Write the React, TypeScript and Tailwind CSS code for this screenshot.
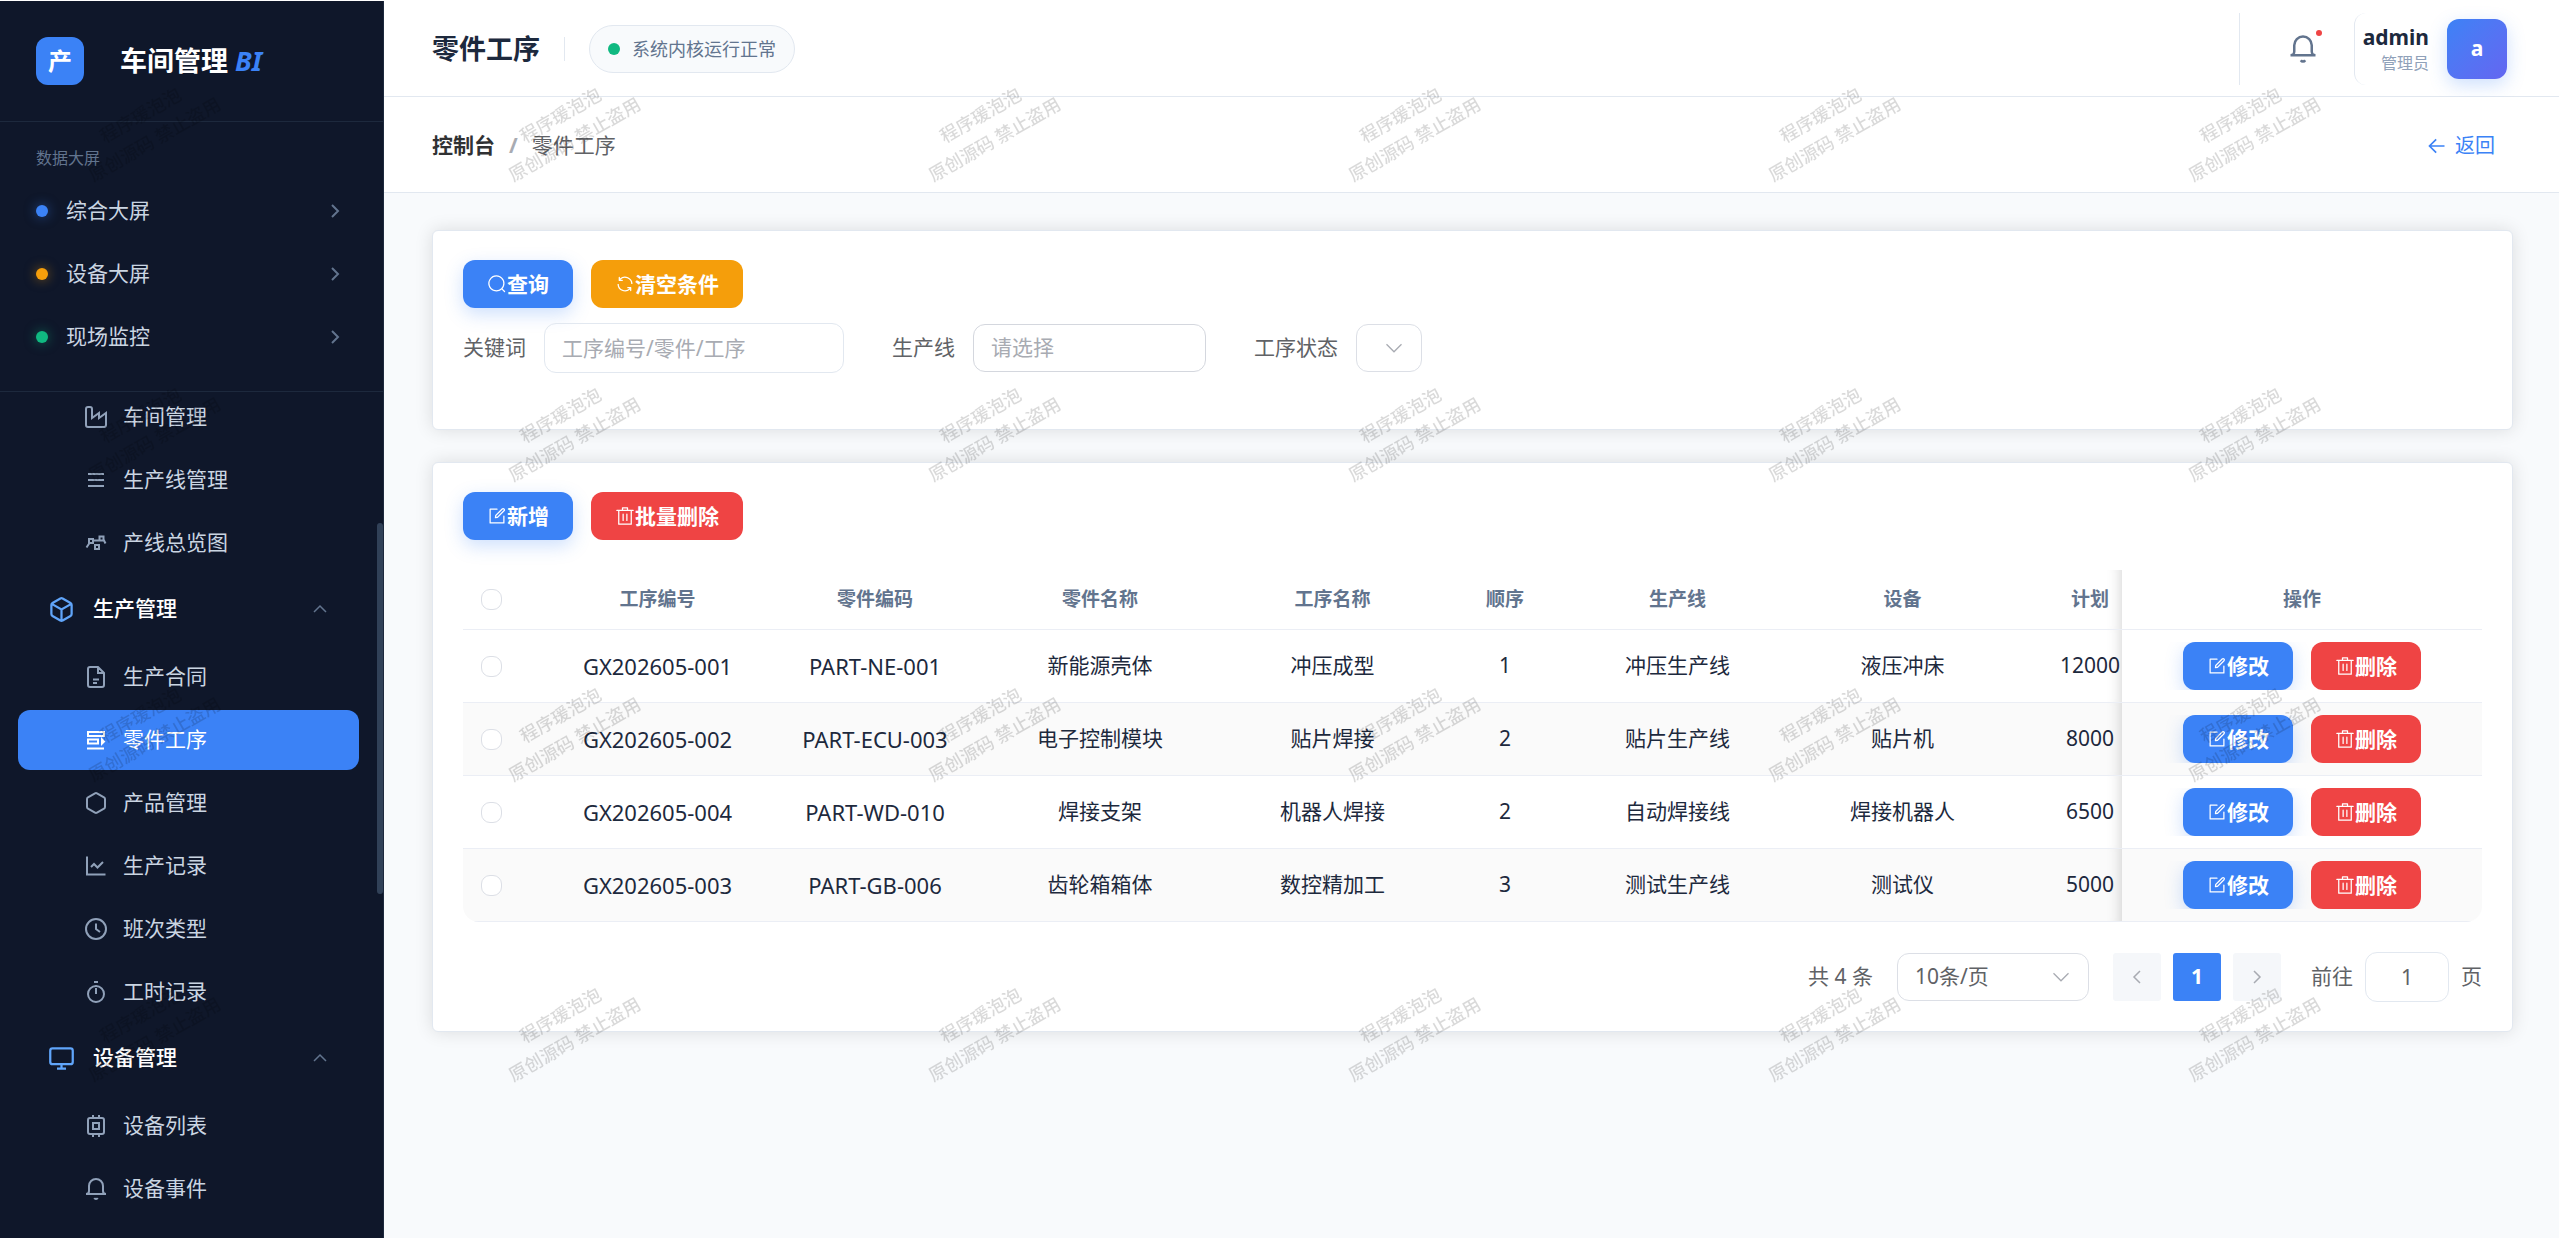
import React from 'react';
import clsx from 'clsx';

const screens = [
    { name: '综合大屏', dot: 'bg-[#3b82f6] shadow-[0_0_12px_#3b82f680]' },
    { name: '设备大屏', dot: 'bg-[#f59e0b] shadow-[0_0_12px_#f59e0b80]' },
    { name: '现场监控', dot: 'bg-[#10b981] shadow-[0_0_12px_#10b98180]' },
];

const HEXAGON = 'M21 16V8a2 2 0 0 0-1-1.73l-7-4a2 2 0 0 0-2 0l-7 4A2 2 0 0 0 3 8v8a2 2 0 0 0 1 1.73l7 4a2 2 0 0 0 2 0l7-4A2 2 0 0 0 21 16z';
const BELL = 'M22 17H2a3 3 0 0 0 3-3V9a7 7 0 0 1 14 0v5a3 3 0 0 0 3 3zm-8.27 4a2 2 0 0 1-3.46 0';

// 24x24 stroke icons
const icons: Record<string, string> = {
    factory: 'M2 20a2 2 0 0 0 2 2h16a2 2 0 0 0 2-2V8l-7 5V8l-7 5V4a2 2 0 0 0-2-2H4a2 2 0 0 0-2 2Z',
    list: 'M4 6h16M4 12h16M4 18h16',
    graph: 'M5 8h4v4H5zM15.5 5.500h4v4h-4zM11 14h4v4h-4zM2.500 16.500l3-4.500M9 9.500h6.500M19.500 8.500l2 4',
    box: HEXAGON + 'M3.300 7l8.700 5 8.700-5M12 22V12',
    file: 'M14 2H6a2 2 0 0 0-2 2v16a2 2 0 0 0 2 2h12a2 2 0 0 0 2-2V8zM14 2v6h6M9 14.500h6M9 18h4',
    process: 'M4 4h16v4H4zM4 11.500h10v4H4zM3 20.500h17M18 11.500l2 2-2 2z',
    hexagon: HEXAGON,
    chart: 'M3 2.500v18h18.500M7 13l3-3 3.500 3.500L19 8',
    clock: 'M12 2a10 10 0 1 0 0 20 10 10 0 0 0 0-20zM12 6.500v5.500l4 3',
    timer: 'M10 2h4M12 8v6M12 6a8 8 0 1 0 0 16 8 8 0 0 0 0-16z',
    monitor: 'M4 3h16a2 2 0 0 1 2 2v10a2 2 0 0 1-2 2H4a2 2 0 0 1-2-2V5a2 2 0 0 1 2-2zM8 21h8M12 17v4',
    cpu: 'M6 4h12a2 2 0 0 1 2 2v12a2 2 0 0 1-2 2H6a2 2 0 0 1-2-2V6a2 2 0 0 1 2-2zM9 9h6v6H9zM9 1v3M15 1v3M9 20v3M15 20v3',
    bell: BELL,
    arrowLeft: 'M21 12H3M11 4l-8 8 8 8',
};

// 1024x1024 filled icons used inside buttons
const glyphs: Record<string, string> = {
    search: 'm795.904 750.72 124.992 124.928a32 32 0 0 1-45.248 45.248L750.656 795.904a416 416 0 1 1 45.248-45.248zM480 832a352 352 0 1 0 0-704 352 352 0 0 0 0 704z',
    refresh: 'M771.776 794.88A384 384 0 0 1 128 512h64a320 320 0 0 0 555.712 216.448H654.72a32 32 0 1 1 0-64h149.056a32 32 0 0 1 32 32v148.928a32 32 0 1 1-64 0v-50.56zM276.288 295.616h92.992a32 32 0 0 1 0 64H220.16a32 32 0 0 1-32-32V178.56a32 32 0 0 1 64 0v50.56A384 384 0 0 1 896.128 512h-64a320 320 0 0 0-555.776-216.384z',
    edit: 'M832 512a32 32 0 1 1 64 0v352a32 32 0 0 1-32 32H160a32 32 0 0 1-32-32V160a32 32 0 0 1 32-32h352a32 32 0 0 1 0 64H192v640h640V512zm-362.048 42.24 52.8-7.552L847.104 222.4a32 32 0 1 0-45.248-45.248L477.44 501.44l-7.552 52.8zm422.4-422.4a96 96 0 0 1 0 135.808l-331.84 331.84a32 32 0 0 1-18.112 9.088L436.8 623.68a32 32 0 0 1-36.224-36.224l15.104-105.6a32 32 0 0 1 9.024-18.112l331.904-331.84a96 96 0 0 1 135.744 0z',
    delete: 'M160 256H96a32 32 0 0 1 0-64h256V95.936a32 32 0 0 1 32-32h256a32 32 0 0 1 32 32V192h256a32 32 0 1 1 0 64h-64v672a32 32 0 0 1-32 32H192a32 32 0 0 1-32-32V256zm448-64v-64H416v64h192zM224 896h576V256H224v640zm192-128a32 32 0 0 1-32-32V416a32 32 0 0 1 64 0v320a32 32 0 0 1-32 32zm192 0a32 32 0 0 1-32-32V416a32 32 0 0 1 64 0v320a32 32 0 0 1-32 32z',
};

type MenuEntry = { name: string; icon: string; group?: boolean; active?: boolean };

const menu: MenuEntry[] = [
    { name: '车间管理', icon: 'factory' },
    { name: '生产线管理', icon: 'list' },
    { name: '产线总览图', icon: 'graph' },
    { name: '生产管理', icon: 'box', group: true },
    { name: '生产合同', icon: 'file' },
    { name: '零件工序', icon: 'process', active: true },
    { name: '产品管理', icon: 'hexagon' },
    { name: '生产记录', icon: 'chart' },
    { name: '班次类型', icon: 'clock' },
    { name: '工时记录', icon: 'timer' },
    { name: '设备管理', icon: 'monitor', group: true },
    { name: '设备列表', icon: 'cpu' },
    { name: '设备事件', icon: 'bell' },
];

const columns = [
    { title: '工序编号', width: 'w-[225px]' },
    { title: '零件编码', width: 'w-[210px]' },
    { title: '零件名称', width: 'w-[240px]' },
    { title: '工序名称', width: 'w-[225px]' },
    { title: '顺序', width: 'w-[120px]' },
    { title: '生产线', width: 'w-[225px]' },
    { title: '设备', width: 'w-[225px]' },
    { title: '计划', width: 'w-[150px]' },
];

const rows = [
    ['GX202605-001', 'PART-NE-001', '新能源壳体', '冲压成型', '1', '冲压生产线', '液压冲床', '12000'],
    ['GX202605-002', 'PART-ECU-003', '电子控制模块', '贴片焊接', '2', '贴片生产线', '贴片机', '8000'],
    ['GX202605-004', 'PART-WD-010', '焊接支架', '机器人焊接', '2', '自动焊接线', '焊接机器人', '6500'],
    ['GX202605-003', 'PART-GB-006', '齿轮箱箱体', '数控精加工', '3', '测试生产线', '测试仪', '5000'],
];

function Icon({ name, className }: { name: string; className?: string }) {
    return (
        <svg viewBox="0 0 24 24" fill="none" stroke="currentColor" strokeWidth="2" className={clsx('shrink-0', className)}>
            <path d={icons[name]} />
        </svg>
    );
}

function Chevron({ dir, className }: { dir: 'up' | 'down' | 'left' | 'right'; className?: string }) {
    const d = {
        up: 'M2 11l6-6 6 6',
        down: 'M2 5l6 6 6-6',
        left: 'M11 2L5 8l6 6',
        right: 'M5 2l6 6-6 6',
    }[dir];
    return (
        <svg viewBox="0 0 16 16" fill="none" stroke="currentColor" className={clsx('shrink-0', className)}>
            <path d={d} />
        </svg>
    );
}

function Button({ icon, color, children }: { icon: string; color: 'blue' | 'amber' | 'red'; children: React.ReactNode }) {
    return (
        <button
            type="button"
            className={clsx(
                'flex h-12 items-center rounded-xl px-6 text-[21px] leading-none font-semibold whitespace-nowrap text-white',
                color === 'blue' && 'bg-[#3b82f6] shadow-[0_6px_18px_rgba(59,130,246,0.25)]',
                color === 'amber' && 'bg-[#f59e0b]',
                color === 'red' && 'bg-[#ef4444]'
            )}
        >
            <svg viewBox="0 0 1024 1024" fill="currentColor" className="size-5 shrink-0">
                <path d={glyphs[icon]} />
            </svg>
            {children}
        </button>
    );
}

function Sidebar() {
    return (
        <aside className="relative flex w-[384px] shrink-0 flex-col border-r border-slate-800 bg-[#0f172a]">
            <div className="flex h-[121px] shrink-0 items-center border-b border-slate-800 pl-9">
                <div className="flex size-12 items-center justify-center rounded-xl bg-[#3b82f6] text-2xl leading-none font-bold text-white">产</div>
                <div className="ml-9 text-[27px] leading-9 font-bold text-white">
                    车间管理 <span className="text-[#3b82f6] italic">BI</span>
                </div>
            </div>

            <div className="shrink-0 border-b border-slate-800 px-9 pt-6 pb-[21px]">
                <div className="mb-[11px] text-base leading-6 text-slate-500">数据大屏</div>
                {screens.map((s) => (
                    <a key={s.name} href="#" className="mb-[3px] flex h-[60px] items-center text-[21px] text-slate-300">
                        <span className={clsx('mr-[18px] size-3 rounded-full', s.dot)} />
                        {s.name}
                        <Chevron dir="right" className="mr-1 ml-auto size-4 text-slate-500 stroke-2" />
                    </a>
                ))}
            </div>

            <nav className="min-h-0 flex-1 overflow-hidden">
                <div className="-mt-[5px] flex flex-col pr-6 pl-[18px]">
                    {menu.map((m) =>
                        m.group ? (
                            <button key={m.name} type="button" className="mb-[5px] flex h-[66px] shrink-0 items-center pr-[31px] pl-[30px] text-[21px] font-medium text-white">
                                <Icon name={m.icon} className="mr-[18px] size-[27px] text-[#60a5fa]" />
                                {m.name}
                                <Chevron dir="up" className="ml-auto size-4 text-slate-500 stroke-[1.5]" />
                            </button>
                        ) : (
                            <a
                                key={m.name}
                                href="#"
                                className={clsx(
                                    'mb-[3px] flex h-[60px] shrink-0 items-center rounded-xl pl-[66px] text-[21px]',
                                    m.active ? 'bg-[#3b82f6] text-white' : 'text-slate-300'
                                )}
                            >
                                <Icon name={m.icon} className={clsx('mr-[15px] size-6', !m.active && 'text-slate-400')} />
                                {m.name}
                            </a>
                        )
                    )}
                </div>
            </nav>
            <div className="absolute top-[522px] right-0 h-[371px] w-1.5 rounded-full bg-slate-700" />
        </aside>
    );
}

function TopBar() {
    return (
        <header className="flex h-24 shrink-0 items-center border-b border-slate-200 bg-white pr-[52px] pl-12">
            <h1 className="text-[27px] leading-9 font-bold text-slate-800">零件工序</h1>
            <span className="mx-6 h-6 w-px bg-slate-200" />
            <span className="flex h-12 items-center rounded-full border border-slate-200 bg-slate-50 px-[18px] text-lg text-slate-500">
                <span className="mr-3 size-3 rounded-full bg-[#10b981]" />
                系统内核运行正常
            </span>

            <div className="ml-auto flex h-[72px] items-center border-l border-slate-200 pr-9 pl-12">
                <button type="button" aria-label="通知" className="relative text-slate-500">
                    <Icon name="bell" className="size-[30px]" />
                    <span className="absolute -top-1 -right-1 size-1.5 rounded-full bg-[#ef4444]" />
                </button>
            </div>
            <div className="flex h-[72px] items-center rounded-l-xl border-l border-slate-200 pl-2">
                <div className="mr-[18px] text-right">
                    <div className="text-[21px] leading-7 font-bold text-slate-800">admin</div>
                    <div className="text-base leading-6 text-slate-400">管理员</div>
                </div>
                <div className="flex size-[60px] items-center justify-center rounded-xl bg-linear-to-br from-[#3b82f6] to-[#6366f1] text-[21px] font-bold text-white shadow-[0_6px_18px_rgba(59,130,246,0.25)]">
                    a
                </div>
            </div>
        </header>
    );
}

function Breadcrumb() {
    return (
        <div className="flex h-24 shrink-0 items-center border-b border-slate-200 bg-white pt-0.5 pr-16 pl-12 text-[21px]">
            <a href="#" className="font-bold text-[#303133]">控制台</a>
            <span className="mx-[14px] font-bold text-[#a8abb2]">/</span>
            <span className="text-[#606266]">零件工序</span>
            <a href="#" className="ml-auto flex items-center gap-2 text-xl text-[#3b82f6]">
                <Icon name="arrowLeft" className="size-5" />
                返回
            </a>
        </div>
    );
}

function SearchCard() {
    return (
        <section className="rounded-md border border-slate-200 bg-white px-[30px] py-[29px] shadow-[0_0_18px_rgba(0,0,0,0.12)]">
            <div className="mb-[15px] flex gap-[18px]">
                <Button icon="search" color="blue">查询</Button>
                <Button icon="refresh" color="amber">清空条件</Button>
            </div>
            <form className="mb-[27px] flex items-center gap-12 text-[21px] text-[#606266]">
                <label className="flex items-center gap-[18px]">
                    关键词
                    <input
                        type="text"
                        placeholder="工序编号/零件/工序"
                        className="h-[50px] w-[300px] rounded-xl border border-slate-200 px-[17px] placeholder:text-[#a8abb2]"
                    />
                </label>
                <label className="flex items-center gap-[18px]">
                    生产线
                    <select className="h-12 w-[233px] appearance-none rounded-xl border border-[#d4d7de] px-[17px] text-[#a8abb2]">
                        <option>请选择</option>
                    </select>
                </label>
                <label className="flex items-center gap-[18px]">
                    工序状态
                    <span className="relative flex">
                        <select className="h-12 w-[66px] appearance-none rounded-xl border border-[#dcdfe6]" />
                        <Chevron dir="down" className="pointer-events-none absolute top-[14px] right-[18px] size-5 text-[#a8abb2] stroke-1" />
                    </span>
                </label>
            </form>
        </section>
    );
}

function Checkbox({ label }: { label: string }) {
    return <input type="checkbox" aria-label={label} className="block size-[21px] appearance-none rounded-[9px] border border-[#dcdfe6] bg-white" />;
}

const fixedCell =
    "sticky right-0 before:absolute before:inset-y-0 before:-left-[15px] before:w-[15px] before:shadow-[inset_-15px_0_15px_-15px_rgba(0,0,0,0.2)] before:content-['']";

function ProcessTable() {
    return (
        <div className="overflow-x-auto rounded-b-2xl [scrollbar-width:none]">
            <table className="w-full min-w-[2062px] table-fixed border-separate border-spacing-0 text-center text-[21px] text-slate-800">
                <thead>
                    <tr className="h-[60px] text-[19px] text-slate-500">
                        <th className="w-[82px] border-b border-[#ebeef5] pl-[18px]">
                            <Checkbox label="全选" />
                        </th>
                        {columns.map((c) => (
                            <th key={c.title} className={clsx('border-b border-[#ebeef5] font-bold', c.width)}>
                                {c.title}
                            </th>
                        ))}
                        <th className={clsx('w-[360px] border-b border-[#ebeef5] bg-white font-bold', fixedCell)}>操作</th>
                    </tr>
                </thead>
                <tbody>
                    {rows.map((row, i) => {
                        const bg = i % 2 ? 'bg-[#fafafa]' : 'bg-white';
                        return (
                            <tr key={row[0]} className="h-[73px]">
                                <td className={clsx('border-b border-[#ebeef5] pl-[18px]', bg)}>
                                    <Checkbox label={row[0]} />
                                </td>
                                {row.map((cell, j) => (
                                    <td key={j} className={clsx('border-b border-[#ebeef5] whitespace-nowrap', bg, j < 2 && 'text-[22px]')}>
                                        {cell}
                                    </td>
                                ))}
                                <td className={clsx('border-b border-[#ebeef5]', bg, fixedCell)}>
                                    <div className="flex justify-center gap-[18px] overflow-hidden">
                                        <Button icon="edit" color="blue">修改</Button>
                                        <Button icon="delete" color="red">删除</Button>
                                    </div>
                                </td>
                            </tr>
                        );
                    })}
                </tbody>
            </table>
        </div>
    );
}

function Pagination() {
    return (
        <div className="mt-[30px] flex items-center justify-end text-[21px] text-[#606266]">
            <span>共 4 条</span>
            <span className="relative mx-6 flex">
                <select aria-label="每页条数" className="h-12 w-[192px] appearance-none rounded-xl border border-[#dcdfe6] px-[17px]">
                    <option>10条/页</option>
                </select>
                <Chevron dir="down" className="pointer-events-none absolute top-[14px] right-[18px] size-5 text-[#a8abb2] stroke-1" />
            </span>
            <div className="flex gap-3">
                <button type="button" aria-label="上一页" className="flex size-12 items-center justify-center rounded-[3px] bg-[#f5f7fa] text-[#a8abb2]">
                    <Chevron dir="left" className="size-4 stroke-[1.5]" />
                </button>
                <button type="button" className="size-12 rounded-[3px] bg-[#3b82f6] font-bold text-white">1</button>
                <button type="button" aria-label="下一页" className="flex size-12 items-center justify-center rounded-[3px] bg-[#f5f7fa] text-[#a8abb2]">
                    <Chevron dir="right" className="size-4 stroke-[1.5]" />
                </button>
            </div>
            <label className="ml-[30px] flex items-center gap-3">
                前往
                <input type="text" defaultValue="1" className="h-[50px] w-[84px] rounded-xl border border-slate-200 text-center" />
                页
            </label>
        </div>
    );
}

function Watermark() {
    return (
        <div aria-hidden="true" className="pointer-events-none absolute inset-0 z-10 overflow-hidden">
            <div className="-mt-[23px] -ml-[63px] grid w-[2520px] grid-cols-6">
                {Array.from({ length: 24 }, (_, i) => (
                    <div key={i} className="flex h-[300px] items-center justify-center">
                        <div className="-rotate-30 text-center text-lg leading-7 font-medium whitespace-nowrap text-black/15">
                            程序瑗泡泡
                            <br />
                            原创源码 禁止盗用
                        </div>
                    </div>
                ))}
            </div>
        </div>
    );
}

export default function App() {
    return (
        <div className="relative flex h-screen overflow-hidden bg-white pt-px font-['Noto_Sans','Noto_Sans_CJK_SC',sans-serif]">
            <Sidebar />
            <div className="flex min-w-0 flex-1 flex-col bg-slate-50">
                <TopBar />
                <Breadcrumb />
                <main className="flex flex-1 flex-col gap-8 overflow-y-auto pt-[37px] pr-[46px] pb-8 pl-12">
                    <SearchCard />
                    <section className="rounded-md border border-slate-200 bg-white px-[30px] py-[29px] shadow-[0_0_18px_rgba(0,0,0,0.12)]">
                        <div className="mb-[30px] flex gap-[18px]">
                            <Button icon="edit" color="blue">新增</Button>
                            <Button icon="delete" color="red">批量删除</Button>
                        </div>
                        <ProcessTable />
                        <Pagination />
                    </section>
                </main>
            </div>
            <Watermark />
        </div>
    );
}
